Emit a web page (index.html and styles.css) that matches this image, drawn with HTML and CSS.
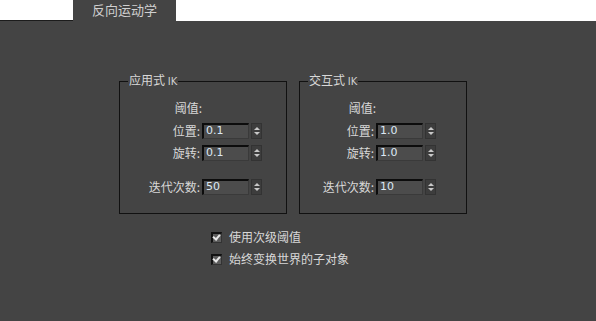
FILE: index.html
```html
<!DOCTYPE html>
<html lang="zh-CN">
<head>
  <meta charset="UTF-8">
  <title>反向运动学</title>
  <link rel="stylesheet" href="styles.css">
</head>
<body>
  <div class="tabbar">
    <div class="tab-blank left"></div>
    <div class="tab">反向运动学</div>
    <div class="tab-blank"></div>
  </div>

  <div class="panel">
    <div class="groups">
      <fieldset class="group group-applied">
        <legend>应用式 <span class="ik">IK</span></legend>
        <div class="rows">
          <div class="label head">阈值:</div><div></div><div></div>
          <div class="label">位置:</div>
          <div class="field">0.1</div>
          <div class="spinner"><span class="up"></span><span class="down"></span></div>
          <div class="label">旋转:</div>
          <div class="field">0.1</div>
          <div class="spinner"><span class="up"></span><span class="down"></span></div>
          <div class="label iter">迭代次数:</div>
          <div class="field iter">50</div>
          <div class="spinner iter"><span class="up"></span><span class="down"></span></div>
        </div>
      </fieldset>

      <fieldset class="group group-interactive">
        <legend>交互式 <span class="ik">IK</span></legend>
        <div class="rows">
          <div class="label head">阈值:</div><div></div><div></div>
          <div class="label">位置:</div>
          <div class="field">1.0</div>
          <div class="spinner"><span class="up"></span><span class="down"></span></div>
          <div class="label">旋转:</div>
          <div class="field">1.0</div>
          <div class="spinner"><span class="up"></span><span class="down"></span></div>
          <div class="label iter">迭代次数:</div>
          <div class="field iter">10</div>
          <div class="spinner iter"><span class="up"></span><span class="down"></span></div>
        </div>
      </fieldset>
    </div>

    <div class="options">
      <label class="check"><span class="box"></span>使用次级阈值</label>
      <label class="check"><span class="box"></span>始终变换世界的子对象</label>
    </div>
  </div>
</body>
</html>
```

FILE: styles.css
```css
body {
  margin: 0;
  background: #444444;
  color: #d8d8d8;
  font-family: "Noto Sans CJK SC", "Liberation Sans", sans-serif;
  font-size: 12px;
}
.tabbar {
  display: flex;
  height: 21px;
}
.tab-blank {
  flex: 1;
  background: #ffffff;
}
.tab-blank.left {
  flex: 0 0 73px;
  height: 20px;
  border-bottom: 1px solid #1c1c1c;
}
.tab {
  flex: 0 0 103px;
  background: #444444;
  color: #d0d0d0;
  text-align: center;
  line-height: 19px;
  font-size: 13px;
}
.panel {
  padding-top: 52px;
  height: 248px;
}
.groups {
  display: flex;
  gap: 12px;
  margin-left: 119px;
}
.group {
  margin: 0;
  padding: 0;
  border: 1px solid #111111;
  width: 166px;
  height: 139px;
}
.group legend {
  margin-left: 8px;
  padding: 0 1px;
  line-height: 14px;
  color: #d8d8d8;
}
.ik {
  font-family: "DejaVu Sans", sans-serif;
  font-size: 10px;
  color: #cfcfcf;
}
.rows {
  display: grid;
  grid-template-rows: 15px 15px 15px 15px;
  column-gap: 2px;
  row-gap: 7px;
  margin-top: 12px;
}
.group-applied .rows {
  grid-template-columns: 80px 47px 11px;
}
.group-interactive .rows {
  grid-template-columns: 74px 47px 11px;
}
.label {
  text-align: right;
  line-height: 15px;
  white-space: nowrap;
}
.label.head {
  margin-right: -2px;
  margin-top: -1px;
}
.iter {
  margin-top: 12px;
}
.field {
  box-sizing: border-box;
  height: 16px;
  background: #4c4c4c;
  border-top: 2px solid #0c0c0c;
  border-left: 2px solid #0c0c0c;
  border-right: 1px solid #3a3a3a;
  border-bottom: 1px solid #3a3a3a;
  color: #dce8f4;
  font-family: "DejaVu Sans", sans-serif;
  font-size: 11px;
  line-height: 12px;
  padding-left: 2px;
}
.spinner {
  box-sizing: border-box;
  height: 16px;
  background: #3d3d3d;
  border: 1px solid #333333;
  display: flex;
  flex-direction: column;
  align-items: center;
  justify-content: space-evenly;
}
.spinner .up {
  width: 0;
  height: 0;
  border-left: 3px solid transparent;
  border-right: 3px solid transparent;
  border-bottom: 3px solid #c8c8c8;
}
.spinner .down {
  width: 0;
  height: 0;
  border-left: 3px solid transparent;
  border-right: 3px solid transparent;
  border-top: 3px solid #c8c8c8;
}
.options {
  margin: 15px 0 0 211px;
  display: flex;
  flex-direction: column;
  gap: 6px;
}
.check {
  display: flex;
  align-items: center;
  gap: 7px;
  line-height: 16px;
  color: #d8d8d8;
}
.box {
  position: relative;
  box-sizing: border-box;
  width: 11px;
  height: 11px;
  background: #5c5c5c;
  border-top: 2px solid #111111;
  border-left: 2px solid #111111;
  border-right: 1px solid #333333;
  border-bottom: 1px solid #333333;
}
.box::after {
  content: "";
  position: absolute;
  left: 1px;
  top: -1px;
  width: 3px;
  height: 5px;
  border-right: 2px solid #e8e8e8;
  border-bottom: 2px solid #e8e8e8;
  transform: rotate(40deg);
}
```
